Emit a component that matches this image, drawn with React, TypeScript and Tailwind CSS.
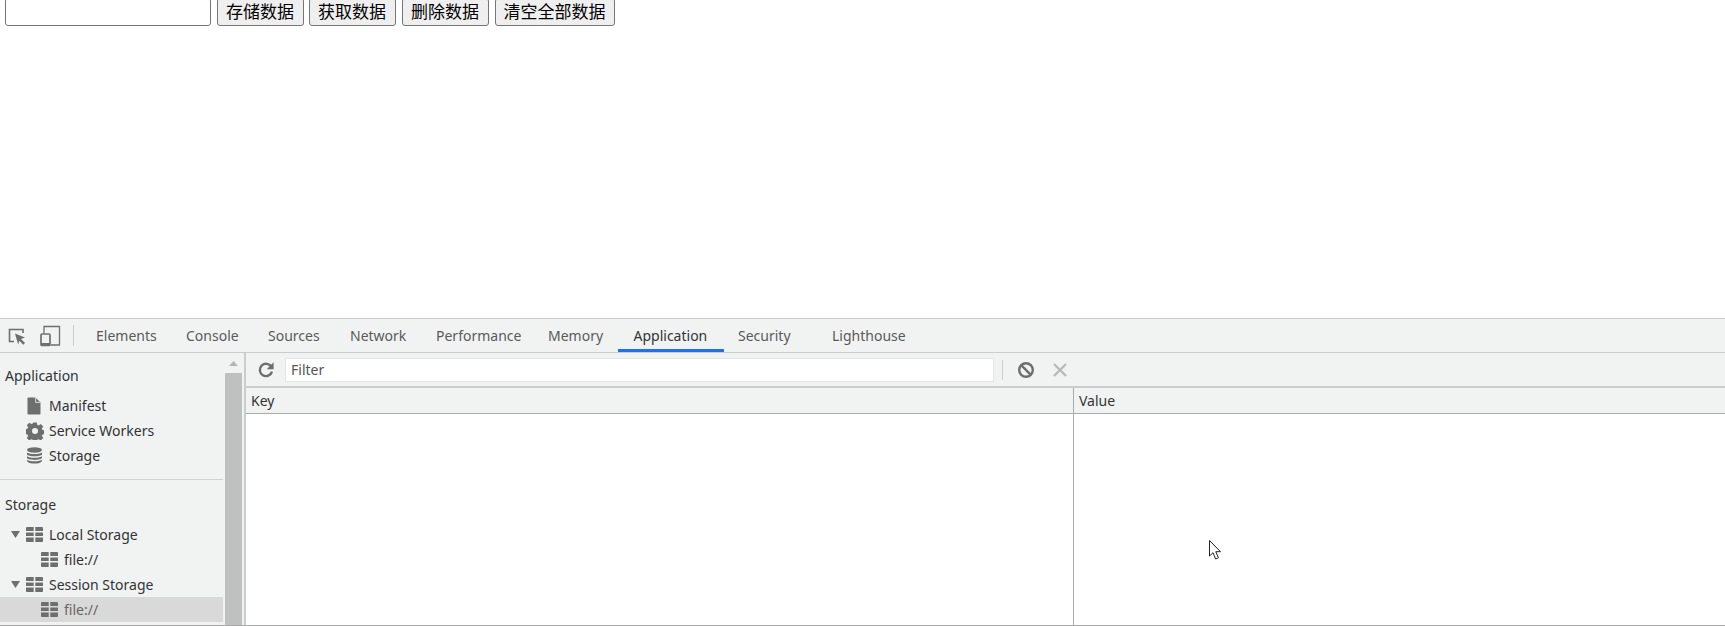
import React from "react";

const ui = "[font-family:'Noto_Sans',sans-serif]";

function Inspect() {
  return (
    <svg width="20" height="20" viewBox="0 0 20 20" className="shrink-0">
      <path d="M7 15.5H2.5V3.5H16V7" fill="none" stroke="#6e6e6e" strokeWidth="1.6" />
      <path d="M8 7.5l10 4-4 1.6 4 4-1.7 1.7-4-4-1.2 3.6z" fill="#6e6e6e" />
    </svg>
  );
}
function Device() {
  return (
    <svg width="22" height="22" viewBox="0 0 22 22" className="shrink-0">
      <path d="M5 8V1.5h15.5v18.5H12" fill="none" stroke="#6e6e6e" strokeWidth="1.3" />
      <rect x="2" y="9" width="9" height="11.5" rx="1" fill="none" stroke="#6e6e6e" strokeWidth="1.7" />
      <rect x="2" y="18" width="9" height="2.5" fill="#6e6e6e" />
    </svg>
  );
}
function Doc() {
  return (
    <svg width="14" height="18" viewBox="0 0 14 18" className="shrink-0">
      <path d="M0.5 1.2Q0.5 0.5 1.2 0.5H8.5L13.5 5.5V16.8Q13.5 17.5 12.8 17.5H1.2Q0.5 17.5 0.5 16.8z" fill="#6e6e6e" />
      <path d="M8.6 0.5V5.4H13.5" fill="none" stroke="#f1f3f3" strokeWidth="0.8" />
    </svg>
  );
}
function Gear() {
  return (
    <svg width="18" height="18" viewBox="0 0 24 24" className="shrink-0">
      <path
        fill="#6e6e6e"
        fillRule="evenodd"
        d="M9.6 0.5h4.8l.6 3.2 1.9.8 2.7-1.8 3.4 3.4-1.8 2.7.8 1.9 3.2.6v4.8l-3.2.6-.8 1.9 1.8 2.7-3.4 3.4-2.7-1.8-1.9.8-.6 3.2H9.6l-.6-3.2-1.9-.8-2.7 1.8-3.4-3.4 1.8-2.7-.8-1.9-3.2-.6V9.6l3.2-.6.8-1.9-1.8-2.7 3.4-3.4 2.7 1.8 1.9-.8zM12 8a4 4 0 1 0 0 8 4 4 0 0 0 0-8z"
      />
    </svg>
  );
}
function Db() {
  return (
    <svg width="17" height="17" viewBox="0 0 17 17" className="shrink-0">
      <ellipse cx="8.5" cy="3" rx="7.5" ry="2.7" fill="#6e6e6e" />
      <path d="M1 5.2C2 7.6 15 7.6 16 5.2V7.4C15 9.8 2 9.8 1 7.4z" fill="#6e6e6e" />
      <path d="M1 8.9C2 11.3 15 11.3 16 8.9V11.1C15 13.5 2 13.5 1 11.1z" fill="#6e6e6e" />
      <path d="M1 12.5C2 14.9 15 14.9 16 12.5V14C15 17.4 2 17.4 1 14z" fill="#6e6e6e" />
    </svg>
  );
}
function Table() {
  return (
    <svg width="17" height="15" viewBox="0 0 17 15" className="shrink-0">
      <path d="M1 0H7.7V4H0V1Q0 0 1 0zM9.3 0H16Q17 0 17 1V4H9.3zM0 5.5H7.7V9H0zM9.3 5.5H17V9H9.3zM0 10.5H7.7V15H1Q0 15 0 14zM9.3 10.5H17V14Q17 15 16 15H9.3z" fill="#6e6e6e" />
    </svg>
  );
}
function Tri() {
  return (
    <svg width="9" height="7" viewBox="0 0 9 7" className="shrink-0">
      <path d="M0 0H9L4.5 7z" fill="#6e6e6e" />
    </svg>
  );
}

const tabs = [
  { t: "Elements", cls: "w-[90px]" },
  { t: "Console", cls: "w-[82px]" },
  { t: "Sources", cls: "w-[82px]" },
  { t: "Network", cls: "w-[86px]" },
  { t: "Performance", cls: "w-[112px]" },
  { t: "Memory", cls: "w-[85px]" },
];

function Row({ icon, label, cls, text }: { icon: React.ReactNode; label: string; cls: string; text?: string }) {
  return (
    <div className={`flex h-[25px] items-center ${cls}`}>
      {icon}
      <span className={`whitespace-nowrap ${text ?? "text-[#333]"}`}>{label}</span>
    </div>
  );
}

export default function App() {
  return (
    <div className={`relative flex h-[626px] w-[1725px] flex-col overflow-hidden bg-white text-[14px] ${ui}`}>
      <div className="h-[318px] shrink-0">
        <div className="-mt-[2px] flex h-[28px] items-stretch pl-[5px] text-[17px] text-black [font-family:'Noto_Sans_CJK_SC',sans-serif]">
          <input className="w-[206px] rounded-[3px] border border-[#767676] bg-white" />
          <button className="ml-[5.5px] w-[87px] rounded-[3px] border border-[#767676] bg-[#efefef] pb-[3px] leading-none">存储数据</button>
          <button className="ml-[5px] w-[87px] rounded-[3px] border border-[#767676] bg-[#efefef] pb-[3px] leading-none">获取数据</button>
          <button className="ml-[6px] w-[87px] rounded-[3px] border border-[#767676] bg-[#efefef] pb-[3px] leading-none">删除数据</button>
          <button className="ml-[6px] w-[120px] rounded-[3px] border border-[#767676] bg-[#efefef] pb-[3px] leading-none">清空全部数据</button>
        </div>
      </div>

      <div className="flex h-[35px] shrink-0 items-stretch border-y border-[#cbcdcd] bg-[#f1f3f3]">
        <div className="flex w-[73px] items-center pl-[7px]">
          <Inspect />
          <span className="ml-[12px]"><Device /></span>
        </div>
        <div className="my-[6px] w-px bg-[#ccc]" />
        <div className="flex items-stretch pl-[7px] text-[#5a5a5a]">
          {tabs.map((x) => (
            <div key={x.t} className={`flex items-center pl-[15px] ${x.cls}`}>
              {x.t}
            </div>
          ))}
          <div className="flex w-[105.5px] items-center border-b-[3px] border-[#1a73e8] pl-[15.5px] pt-[3px] text-[#333]">Application</div>
          <div className="flex w-[94px] items-center pl-[14.5px]">Security</div>
          <div className="flex items-center pl-[14.5px]">Lighthouse</div>
        </div>
      </div>

      <div className="flex min-h-0 flex-1 border-b border-[#aaa]">
        <div className="flex w-[244px] shrink-0 bg-[#f1f3f3]">
          <div className="w-[223px] shrink-0 pt-[10px] text-[#333]">
            <div className="flex h-[25px] items-center pl-[5px]">Application</div>
            <div className="mt-[5px]">
              <Row cls="gap-[8px] pl-[27px]" icon={<Doc />} label="Manifest" />
              <Row cls="gap-[5px] pl-[26px]" icon={<Gear />} label="Service Workers" />
              <Row cls="gap-[6px] pl-[26px]" icon={<Db />} label="Storage" />
            </div>
            <div className="mt-[11px] h-px bg-[#cfd1d4]" />
            <div className="mt-[12px] flex h-[25px] items-center pl-[5px]">Storage</div>
            <div className="mt-[5px]">
              <Row cls="gap-[6px] pl-[11px]" icon={<><Tri /><Table /></>} label="Local Storage" />
              <Row cls="gap-[6px] pl-[41px]" icon={<Table />} label="file://" />
              <Row cls="gap-[6px] pl-[11px]" icon={<><Tri /><Table /></>} label="Session Storage" />
              <Row cls="gap-[6px] bg-[#d9d9d9] pl-[41px]" icon={<Table />} label="file://" text="text-[#666]" />
            </div>
          </div>
          <div className="ml-[2px] flex w-[17px] shrink-0 flex-col">
            <div className="flex h-[20px] items-center justify-center">
              <svg width="9" height="5" viewBox="0 0 9 5"><path d="M0 5H9L4.5 0z" fill="#b4b6b6" /></svg>
            </div>
            <div className="flex-1 bg-[#bfc1c0]" />
          </div>
        </div>

        <div className="flex min-w-0 flex-1 flex-col border-l-2 border-[#cbcdcd]">
          <div className="flex h-[35px] shrink-0 items-center border-b-2 border-[#cbcdcd] bg-[#f1f3f3]">
            <svg width="18" height="18" viewBox="0 0 18 18" className="ml-[11px] shrink-0">
              <path d="M14.6 6.2A6.2 6.2 0 1 0 15 10.6" fill="none" stroke="#6e6e6e" strokeWidth="2.4" />
              <path d="M16.6 1.2V8.2H9.6z" fill="#6e6e6e" />
            </svg>
            <div className="ml-[10px] flex h-[24px] w-[709px] shrink-0 items-center border border-[#e4e6e6] bg-white pl-[5px] text-[#555]">Filter</div>
            <div className="ml-[8px] h-[20px] w-px bg-[#ccc]" />
            <svg width="18" height="18" viewBox="0 0 18 18" className="ml-[14px] shrink-0">
              <circle cx="9" cy="9" r="6.8" fill="none" stroke="#6e6e6e" strokeWidth="2.4" />
              <path d="M4.2 4.2L13.8 13.8" stroke="#6e6e6e" strokeWidth="2.4" />
            </svg>
            <svg width="14" height="14" viewBox="0 0 14 14" className="ml-[18px] shrink-0">
              <path d="M1 1L13 13M13 1L1 13" stroke="#b9baba" strokeWidth="2.4" />
            </svg>
          </div>
          <div className="flex min-h-0 flex-1">
            <div className="flex w-[828px] shrink-0 flex-col border-r border-[#aaa]">
              <div className="flex h-[26px] items-center border-b border-[#aaa] bg-[#f1f3f3] pl-[5px] text-[#333]">Key</div>
            </div>
            <div className="flex flex-1 flex-col">
              <div className="flex h-[26px] items-center border-b border-[#aaa] bg-[#f1f3f3] pl-[5px] text-[#333]">Value</div>
            </div>
          </div>
        </div>
      </div>

      <svg width="14" height="20" viewBox="0 0 14 20" className="absolute left-[1209px] top-[540px]">
        <path d="M0.5 0.5V16L4 12.7L6.6 19L9.4 17.8L6.8 11.7H11.5z" fill="#fff" stroke="#222" strokeWidth="1" />
      </svg>
    </div>
  );
}
